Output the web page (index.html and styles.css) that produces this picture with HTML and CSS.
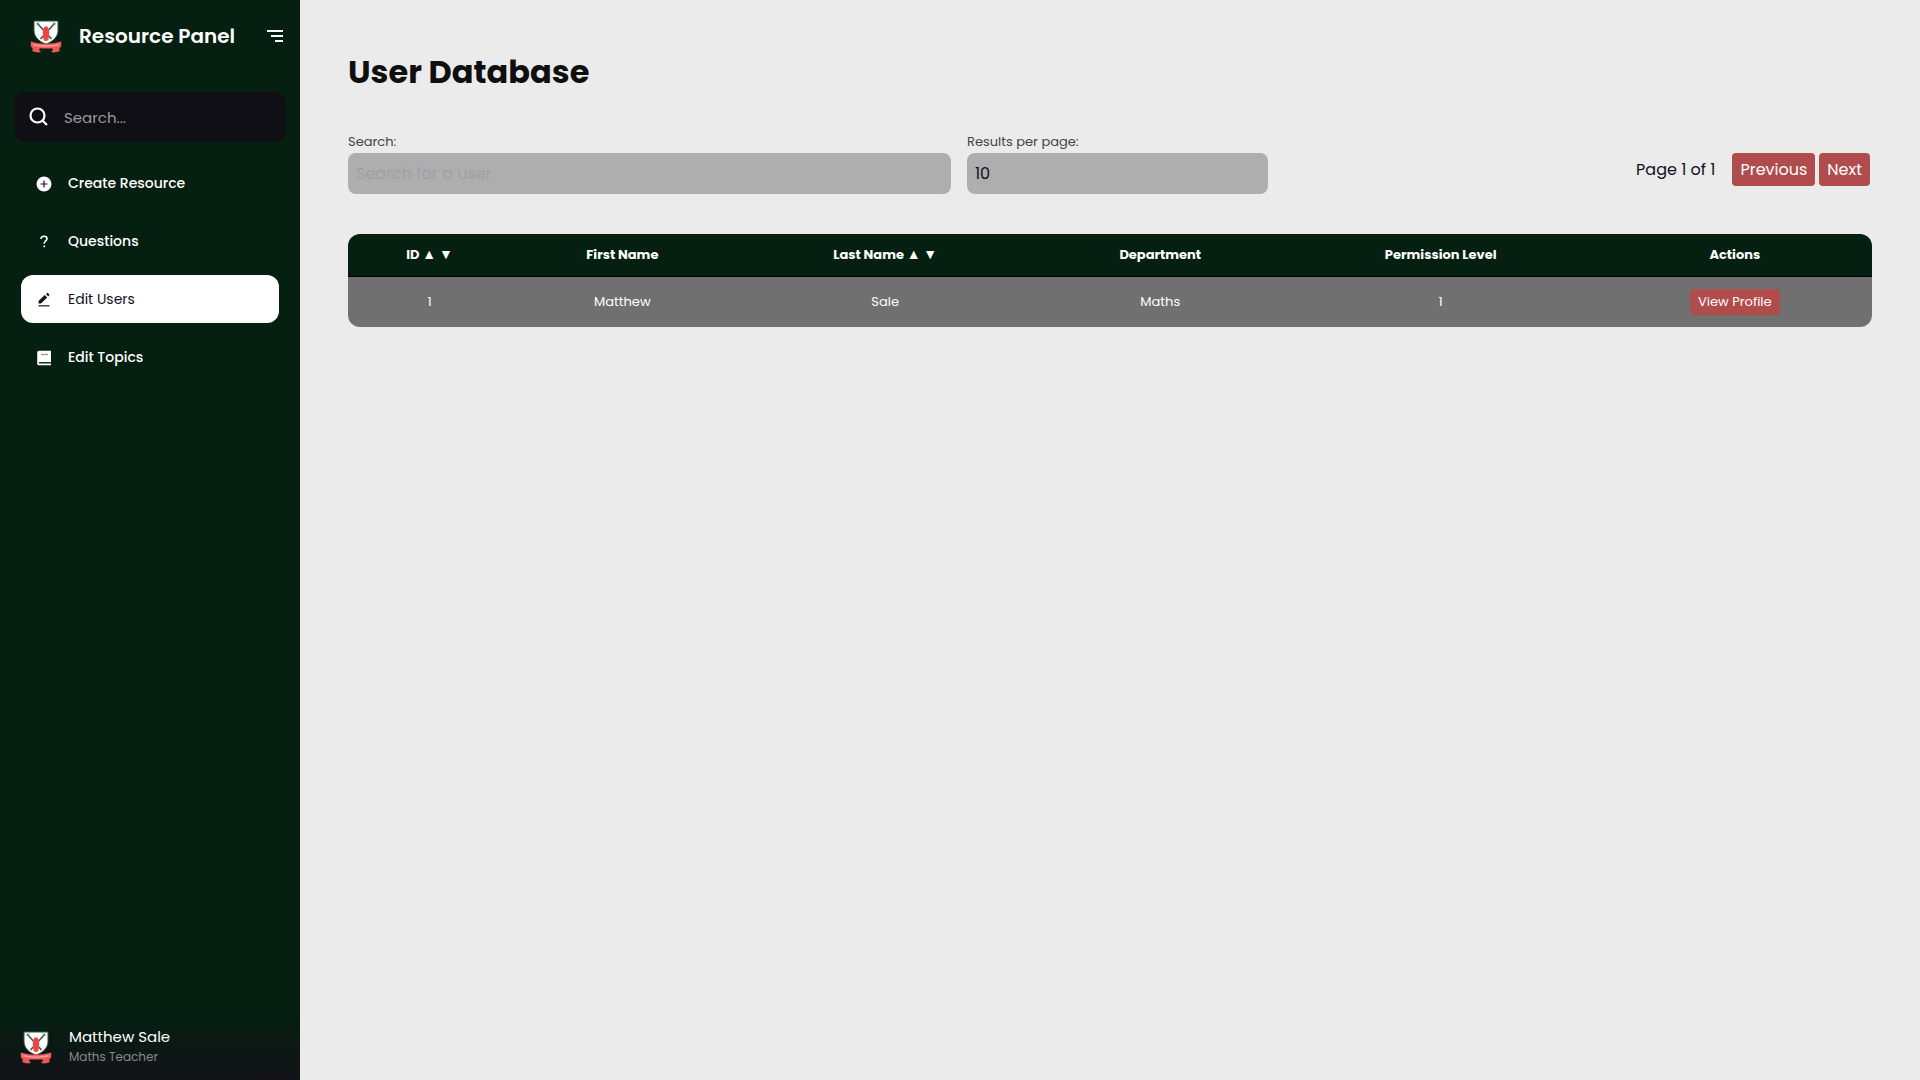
FILE: index.html
```html
<!DOCTYPE html>
<html lang="en">
<head>
    <meta charset="UTF-8">
    <meta name="viewport" content="width=device-width, initial-scale=1.0">
    <title>Resource Panel - User Database</title>
    <link rel="stylesheet" href="styles.css">
</head>

<body>

    <!-- Shared crest -->
    <svg class="sprite" aria-hidden="true">
        <symbol id="crest" viewBox="0 0 32 34">
            <path d="M4 2h24v9.500c0 6-4.500 11-12 13.500C8.500 22.500 4 17.500 4 11.500z" fill="#fff" stroke="#2b5a43" stroke-width="1"/>
            <path d="M7 4l14.500 16M25 4L10.500 20" stroke="#3c6650" stroke-width="1.800"/>
            <path d="M6.500 6l3-2.500M25.500 6l-3-2.500" stroke="#7e9a8a" stroke-width="1"/>
            <path d="M13.500 9.500l1-2h3l1 2 .8 4-.8 7-1.500 1.500h-2l-1.500-1.500-.8-7z" fill="#ef4848"/>
            <path d="M16 9v11" stroke="#d63a3a" stroke-width=".6"/>
            <path d="M1 27.500l9.500 1.200-1.500 2 2 2.300c-3 1-6 .4-9.200-1.200l1.200-1.600z" fill="#e95757"/>
            <path d="M31 27.500l-9.500 1.200 1.500 2-2 2.300c3 1 6 .4 9.200-1.200l-1.200-1.600z" fill="#e95757"/>
            <path d="M.8 22.500c5 1.600 10 2.200 15.200 2.200s10.200-.6 15.200-2.200v5c-5 1.400-10 2-15.200 2S5.800 28.900.8 27.500z" fill="#f25f5f"/>
            <path d="M3.500 25.600c8 2.100 17 2.100 25 0" fill="none" stroke="#ffc9c4" stroke-width="1.200" stroke-dasharray="1.300 .7"/>
        </symbol>
    </svg>

    <!-- Sidebar -->
    <aside class="sidebar">
        <div class="sidebar-header">
            <svg class="crest"><use href="#crest"/></svg>
            <span class="brand">Resource Panel</span>
            <button class="menu-toggle" aria-label="Toggle menu">
                <svg width="18" height="14" viewBox="0 0 18 14">
                    <path d="M1 2h16M5 7h12M9 12h8" stroke="#fff" stroke-width="2"/>
                </svg>
            </button>
        </div>

        <label class="sidebar-search">
            <svg width="20" height="20" viewBox="0 0 20 20" fill="none" stroke="#fff" stroke-width="2.200">
                <circle cx="8.500" cy="8.500" r="7"/>
                <path d="M13.500 13.500l4.500 4.500"/>
            </svg>
            <input type="text" placeholder="Search..." aria-label="Search">
        </label>

        <nav class="nav">
            <a href="#">
                <svg width="16" height="16" viewBox="0 0 16 16">
                    <circle cx="8" cy="8" r="7.500" fill="#fff"/>
                    <path d="M8 4.500v7M4.500 8h7" stroke="#2a1030" stroke-width="1.200"/>
                </svg>
                Create Resource
            </a>
            <a href="#">
                <svg width="16" height="16" viewBox="0 0 16 16">
                    <path d="M5 5c0-1.800 1.300-2.800 3-2.800s3 1 3 2.500c0 2.200-2.800 2.300-2.800 5" fill="none" stroke="#fff" stroke-width="1.600"/>
                    <path d="M7.400 11.500h1.700v1.700H7.400z" fill="#fff"/>
                </svg>
                Questions
            </a>
            <a href="#" class="active">
                <svg width="16" height="16" viewBox="0 0 16 16" fill="#0c1a14">
                    <path d="M2.500 11.500V9l6.200-6 2.500 2.500-6.200 6z"/>
                    <path d="M10 2l1.700-1.300 1.900 2-1.400 1.800z"/>
                    <path d="M2.500 13.200h11v1.200h-11z"/>
                </svg>
                Edit Users
            </a>
            <a href="#">
                <svg width="16" height="16" viewBox="0 0 16 16">
                    <path d="M3 .8h12v14.400H3c-1 0-1.800-.8-1.800-1.800V2.600C1.200 1.600 2 .8 3 .8z" fill="#fff"/>
                    <path d="M5 4.500h7" stroke="#8b9a92" stroke-width="1.200"/>
                    <path d="M3 12.800h12" stroke="#051f11" stroke-width="1.400"/>
                </svg>
                Edit Topics
            </a>
        </nav>

        <div class="profile">
            <svg class="crest"><use href="#crest"/></svg>
            <div>
                <div class="profile-name">Matthew Sale</div>
                <div class="profile-role">Maths Teacher</div>
            </div>
        </div>
    </aside>

    <!-- Main content -->
    <main class="content">
        <h1>User Database</h1>

        <div class="toolbar">
            <div class="filters">
                <div class="field">
                    <label for="user-search">Search:</label>
                    <input type="text" id="user-search" placeholder="Search for a user">
                </div>
                <div class="field">
                    <label for="per-page">Results per page:</label>
                    <select id="per-page">
                        <option value="10">10</option>
                        <option value="25">25</option>
                        <option value="50">50</option>
                    </select>
                </div>
            </div>
            <div class="pagination">
                <span>Page 1 of 1</span>
                <button class="btn">Previous</button>
                <button class="btn">Next</button>
            </div>
        </div>

        <table class="users">
            <colgroup>
                <col class="col-id">
                <col class="col-first">
                <col class="col-last">
                <col class="col-department">
                <col class="col-permission">
                <col class="col-actions">
            </colgroup>
            <thead>
                <tr>
                    <th>ID <a href="#">▲</a> <a href="#">▼</a></th>
                    <th>First Name</th>
                    <th>Last Name <a href="#">▲</a> <a href="#">▼</a></th>
                    <th>Department</th>
                    <th>Permission Level</th>
                    <th>Actions</th>
                </tr>
            </thead>
            <tbody>
                <tr>
                    <td>1</td>
                    <td>Matthew</td>
                    <td>Sale</td>
                    <td>Maths</td>
                    <td>1</td>
                    <td><button class="btn btn-small">View Profile</button></td>
                </tr>
            </tbody>
        </table>
    </main>

</body>

</html>
```

FILE: styles.css
```css
* {
    box-sizing: border-box;
}

body {
    display: flex;
    min-height: 100vh;
    margin: 0;
    background-color: #ebebeb;
    color: #11101d;
    font-family: Poppins, Inter, sans-serif;
    font-size: 16px;
}

input,
select,
button {
    font-family: inherit;
    border: none;
}

button {
    cursor: pointer;
}

a {
    color: inherit;
    text-decoration: none;
}

.sprite {
    position: absolute;
    width: 0;
    height: 0;
}

.crest {
    flex: none;
    width: 32px;
    height: 34px;
}

/* Sidebar */
.sidebar {
    display: flex;
    flex-direction: column;
    flex: none;
    width: 300px;
    background-color: #051f11;
    color: #fff;
}

.sidebar-header {
    display: flex;
    align-items: center;
    height: 72px;
    padding: 0 16px 0 30px;
}

.brand {
    margin-left: 17px;
    font-size: 20px;
    font-weight: 600;
}

.menu-toggle {
    display: flex;
    margin-left: auto;
    padding: 0;
    background: none;
}

.sidebar-search {
    display: flex;
    align-items: center;
    height: 50px;
    margin: 20px 14px 17px;
    padding: 0 15px;
    border-radius: 12px;
    background-color: #100f15;
}

.sidebar-search input {
    flex: 1;
    min-width: 0;
    margin-left: 15px;
    padding: 0;
    background: none;
    color: #fff;
    font-size: 15px;
    outline: none;
}

.sidebar-search input::placeholder {
    color: #9a9a9e;
}

.nav {
    display: flex;
    flex-direction: column;
    gap: 10px;
    padding: 0 21px;
}

.nav a {
    display: flex;
    align-items: center;
    gap: 16px;
    height: 48px;
    padding: 1px 15px 0;
    border-radius: 12px;
    font-size: 14px;
    font-weight: 500;
}

.nav .active {
    background-color: #fff;
    color: #11101d;
    font-weight: 400;
}

.profile {
    display: flex;
    align-items: center;
    gap: 17px;
    height: 66px;
    margin-top: auto;
    padding: 0 20px;
    background: linear-gradient(#051f11, #131217);
}

.profile-name {
    font-size: 15px;
    line-height: 20px;
}

.profile-role {
    color: #858a88;
    font-size: 12px;
    line-height: 20px;
}

/* Main content */
.content {
    flex: 1;
    padding: 48px;
}

h1 {
    margin: 0 0 34px;
    color: #0f0f0f;
    font-size: 32px;
    line-height: 48px;
}

.toolbar {
    display: flex;
    justify-content: space-between;
    margin-bottom: 40px;
}

.filters {
    display: grid;
    grid-template-columns: 2fr 1fr;
    gap: 16px;
    width: 60.4%;
}

.field {
    display: flex;
    flex-direction: column;
    min-width: 0;
}

.field label {
    color: #444;
    font-size: 13px;
    line-height: 23px;
}

.field input,
.field select {
    width: 100%;
    height: 41px;
    padding: 0 8px;
    border-radius: 8px;
    background-color: #aeaeae;
    color: #11101d;
    font-size: 16px;
    appearance: none;
}

.field input::placeholder {
    color: #a09fa9;
}

.pagination {
    display: flex;
    align-items: center;
    align-self: flex-start;
    gap: 4px;
    margin: 23px 2px 0 0;
}

.pagination span {
    margin-right: 13px;
}

.btn {
    height: 33px;
    padding: 0 8px;
    border-radius: 4px;
    background-color: #b04c4c;
    color: #fff;
    font-size: 16px;
}

.btn-small {
    height: 26px;
    font-size: 13px;
}

.users {
    width: 100%;
    table-layout: fixed;
    border-collapse: separate;
    border-spacing: 0;
    border-radius: 12px;
    overflow: hidden;
    color: #fff;
    font-size: 13px;
    text-align: center;
}

.users th,
.users td {
    padding: 0;
}

.users th {
    height: 43px;
    background-color: #051f11;
    border-bottom: 1px solid #000;
}

/* Sort arrows */
.users th a {
    font-family: "Liberation Sans", Arial, sans-serif;
    font-size: 14px;
}

.users td {
    height: 50px;
    background-color: #707070;
}

.col-id {
    width: 10.7%;
}

.col-first {
    width: 14.6%;
}

.col-last {
    width: 19.9%;
}

.col-department {
    width: 16.2%;
}

.col-permission {
    width: 20.6%;
}

.col-actions {
    width: 18%;
}
```
